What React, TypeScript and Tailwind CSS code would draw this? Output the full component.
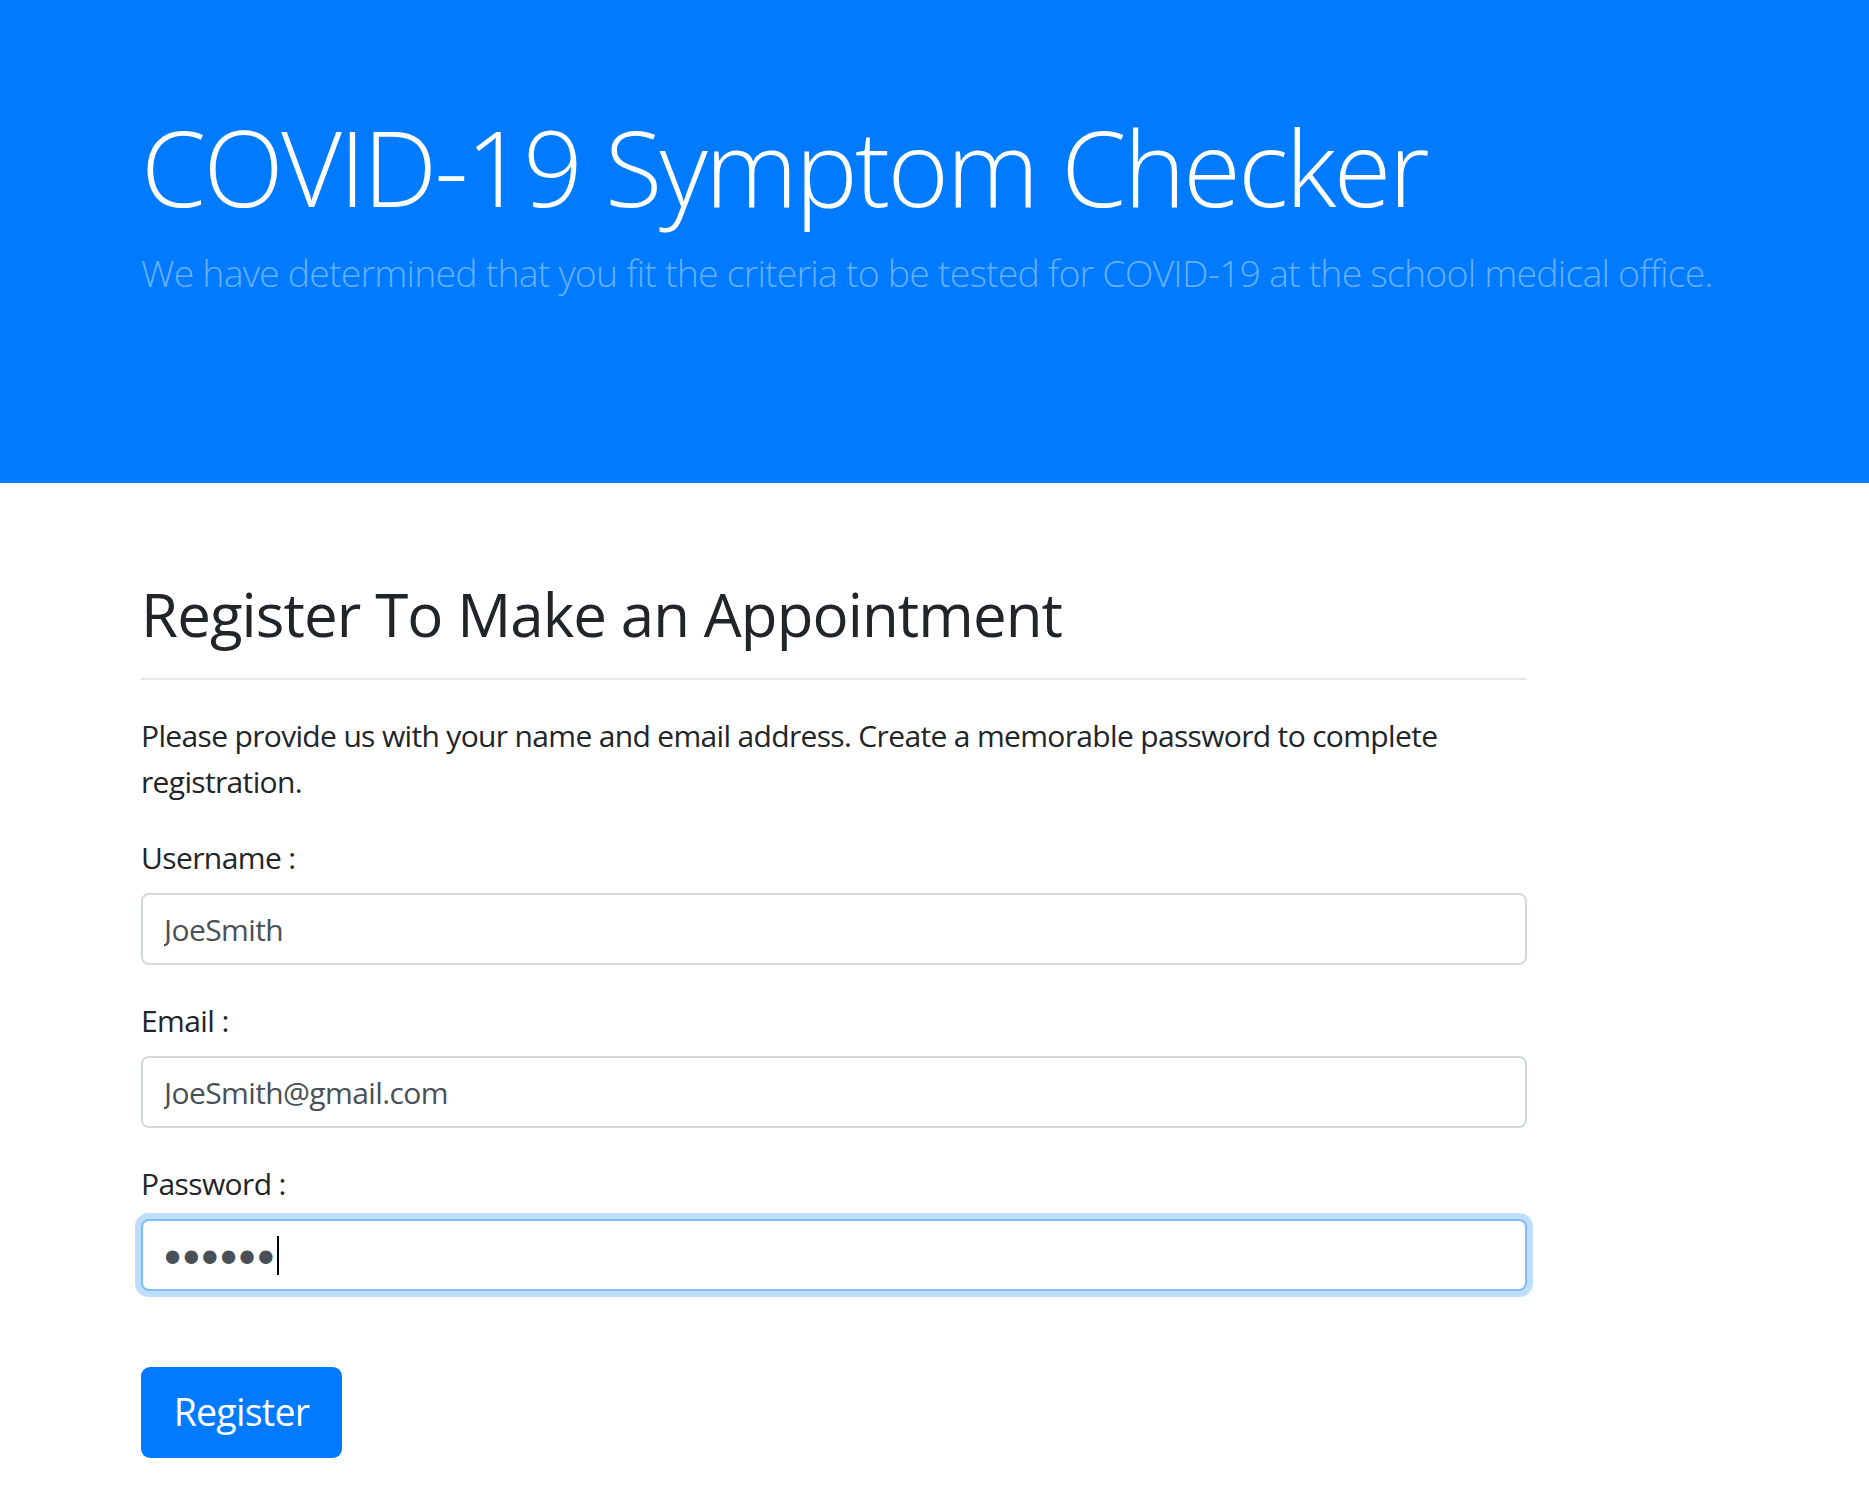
import React, { useState } from "react";

const Field = ({
  label,
  type,
  value,
  onChange,
  focused,
}: {
  label: string;
  type: string;
  value: string;
  onChange: (v: string) => void;
  focused?: boolean;
}) => (
  <div className="flex flex-col">
    <label className="text-[30px] leading-[42px] tracking-[-0.02em] text-[#212529] mb-[14px]">{label}</label>
    {focused ? (
      <div className="relative">
        <input
          type={type}
          value={value}
          onChange={(e) => onChange(e.target.value)}
          className="h-[72px] w-full rounded-[8px] border-2 border-[#80bdff] bg-white pl-[16px] pr-[21px] pt-[8px] font-['DejaVu_Sans',sans-serif] text-[46px] leading-[50px] tracking-[-8.5px] text-[#495057] outline-none shadow-[0_0_0_6px_rgba(0,123,255,0.25)]"
        />
        {/* caret */}
        <span className="pointer-events-none absolute left-[136px] top-[17px] h-[39px] w-[2px] bg-black" />
      </div>
    ) : (
      <input
        type={type}
        value={value}
        onChange={(e) => onChange(e.target.value)}
        className="h-[72px] w-full rounded-[8px] border-2 border-[#d3d8de] bg-white px-[21px] text-[30px] tracking-[-0.02em] text-[#495057] outline-none"
      />
    )}
  </div>
);

export default function App() {
  const [username, setUsername] = useState("JoeSmith");
  const [email, setEmail] = useState("JoeSmith@gmail.com");
  const [password, setPassword] = useState("secret");

  return (
    <div className="min-h-[1510px] bg-white font-['Open_Sans',sans-serif]">
      {/* Jumbotron */}
      <div className="h-[483px] bg-[#007bff] pl-[141px] pt-[104px]">
        <h1 className="text-[105px] font-light leading-[126px] tracking-[-0.025em] text-white mb-[15px]">
          COVID-19 Symptom Checker
        </h1>
        <p className="text-[37.5px] font-light leading-[56px] tracking-[-0.022em] text-[#66b0ff]">
          We have determined that you fit the criteria to be tested for COVID-19 at the school medical office.
        </p>
      </div>

      {/* Registration form */}
      <div className="w-[1386px] ml-[141px] pt-[95px]">
        <h2 className="text-[60px] leading-[72px] tracking-[-0.015em] text-[#212529]">Register To Make an Appointment</h2>
        <hr className="mt-[28px] mb-[33px] border-t-2 border-[#e6e6e6]" />
        <p className="text-[30px] leading-[46px] tracking-[-0.022em] text-[#212529] mb-[32px]">
          Please provide us with your name and email address. Create a memorable password to complete registration.
        </p>
        <div className="flex flex-col gap-[35px]">
          <Field label="Username :" type="text" value={username} onChange={setUsername} />
          <Field label="Email :" type="email" value={email} onChange={setEmail} />
          <Field label="Password :" type="password" value={password} onChange={setPassword} focused />
        </div>
        <button className="mt-[76px] h-[91px] w-[201px] rounded-[9px] bg-[#007bff] text-[37.5px] tracking-[-0.02em] text-white">
          Register
        </button>
      </div>
    </div>
  );
}
